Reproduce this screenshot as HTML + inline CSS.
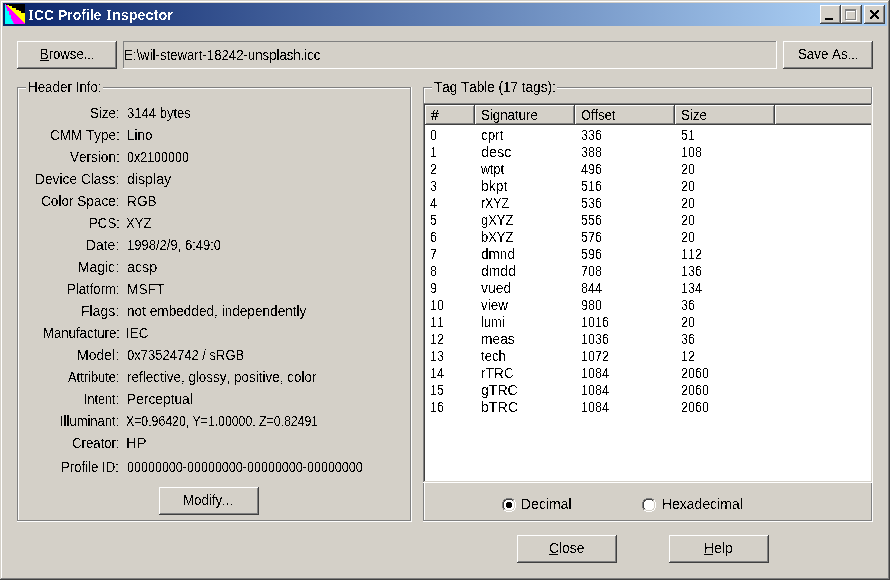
<!DOCTYPE html><html><head><meta charset="utf-8"><title>ICC Profile Inspector</title><style>
html,body{margin:0;padding:0;}
body{width:890px;height:580px;overflow:hidden;background:#d4d0c8;font-family:"Liberation Sans",sans-serif;font-size:14px;color:#000;position:relative;font-kerning:none;}
.a{position:absolute;}
#txt{position:absolute;left:0;top:0;width:890px;height:580px;filter:url(#th);}
#ttl{position:absolute;left:0;top:0;width:200px;height:30px;filter:url(#th2);}
.t{position:absolute;white-space:nowrap;line-height:16px;height:16px;transform-origin:0 0;}
.b{font-weight:bold;color:#fff;}
.sf{font-family:"Liberation Serif",serif;}
.ul{position:absolute;height:1px;background:#000;}
.btn{position:absolute;background:linear-gradient(#404040,#404040) right 0 top 0/1px 100% no-repeat,linear-gradient(#404040,#404040) left 0 bottom 0/100% 1px no-repeat,linear-gradient(#fff,#fff) left 0 top 0/100% 1px no-repeat,linear-gradient(#fff,#fff) left 0 top 0/1px 100% no-repeat,linear-gradient(#808080,#808080) right 1px top 1px/1px calc(100% - 2px) no-repeat,linear-gradient(#808080,#808080) left 1px bottom 1px/calc(100% - 2px) 1px no-repeat,#d4d0c8;}
.sunk{position:absolute;background:linear-gradient(#fff,#fff) right 0 top 0/1px 100% no-repeat,linear-gradient(#fff,#fff) left 0 bottom 0/100% 1px no-repeat,linear-gradient(#808080,#808080) left 0 top 0/100% 1px no-repeat,linear-gradient(#808080,#808080) left 0 top 0/1px 100% no-repeat,linear-gradient(#d4d0c8,#d4d0c8) right 1px top 1px/1px calc(100% - 2px) no-repeat,linear-gradient(#d4d0c8,#d4d0c8) left 1px bottom 1px/calc(100% - 2px) 1px no-repeat,linear-gradient(#404040,#404040) left 1px top 1px/calc(100% - 2px) 1px no-repeat,linear-gradient(#404040,#404040) left 1px top 1px/1px calc(100% - 2px) no-repeat,#fff;}
.fld{position:absolute;background:linear-gradient(#fff,#fff) right 0 top 0/1px 100% no-repeat,linear-gradient(#fff,#fff) left 0 bottom 0/100% 1px no-repeat,linear-gradient(#808080,#808080) left 0 top 0/100% 1px no-repeat,linear-gradient(#808080,#808080) left 0 top 0/1px 100% no-repeat;}
.grp{position:absolute;background:linear-gradient(#fff,#fff) right 0 top 0/1px 100% no-repeat,linear-gradient(#fff,#fff) left 0 bottom 0/100% 1px no-repeat,linear-gradient(#808080,#808080) left 0 top 0/100% 1px no-repeat,linear-gradient(#808080,#808080) left 0 top 0/1px 100% no-repeat,linear-gradient(#808080,#808080) right 1px top 1px/1px calc(100% - 2px) no-repeat,linear-gradient(#808080,#808080) left 1px bottom 1px/calc(100% - 2px) 1px no-repeat,linear-gradient(#fff,#fff) left 1px top 1px/calc(100% - 2px) 1px no-repeat,linear-gradient(#fff,#fff) left 1px top 1px/1px calc(100% - 2px) no-repeat;}
.frm{position:absolute;background:linear-gradient(#404040,#404040) right 0 top 0/1px 100% no-repeat,linear-gradient(#404040,#404040) left 0 bottom 0/100% 1px no-repeat,linear-gradient(#d4d0c8,#d4d0c8) left 0 top 0/100% 1px no-repeat,linear-gradient(#d4d0c8,#d4d0c8) left 0 top 0/1px 100% no-repeat,linear-gradient(#808080,#808080) right 1px top 1px/1px calc(100% - 2px) no-repeat,linear-gradient(#808080,#808080) left 1px bottom 1px/calc(100% - 2px) 1px no-repeat,linear-gradient(#fff,#fff) left 1px top 1px/calc(100% - 2px) 1px no-repeat,linear-gradient(#fff,#fff) left 1px top 1px/1px calc(100% - 2px) no-repeat;}
.gl{position:absolute;background:#d4d0c8;height:4px;}
</style></head><body>
<svg width="0" height="0" style="position:absolute"><defs><filter id="th" x="0" y="0" width="100%" height="100%" color-interpolation-filters="sRGB"><feComponentTransfer><feFuncA type="discrete" tableValues="0 1"/></feComponentTransfer></filter><filter id="th3" x="0" y="0" width="100%" height="100%" color-interpolation-filters="sRGB"><feComponentTransfer><feFuncA type="discrete" tableValues="0 1 1"/></feComponentTransfer></filter><filter id="th2" x="0" y="0" width="100%" height="100%" color-interpolation-filters="sRGB"><feComponentTransfer><feFuncA type="discrete" tableValues="0 0 0 1 1"/></feComponentTransfer></filter></defs></svg>
<div class="frm" style="left:0;top:0;width:890px;height:580px;"></div>
<div class="a" style="left:3px;top:3px;width:884px;height:23px;background:linear-gradient(to right,#0a246a 0,#a6caf0 815px,#a6caf0 100%);"></div>
<svg class="a" style="left:5px;top:4px" width="20" height="20" viewBox="0 0 20 20" shape-rendering="crispEdges"><rect width="20" height="20" fill="#000"/><path d="M2 1H4V2H2ZM3 2H7V3H3ZM4 3H7V4H4ZM5 4H11V5H5ZM6 5H11V6H6ZM7 6H14V7H7ZM8 7H16V8H8ZM9 8H16V9H9ZM10 9H20V10H10ZM11 10H20V11H11ZM12 11H20V12H12ZM13 12H20V13H13ZM14 13H20V14H14ZM15 14H20V15H15ZM16 15H20V16H16ZM17 16H20V17H17ZM18 17H20V18H18ZM19 18H20V19H19Z" fill="#ff0"/><path d="M0 0H1V1H0ZM1 1H2V2H1ZM1 2H3V3H1ZM1 3H4V4H1ZM2 4H5V5H2ZM2 5H6V6H2ZM2 6H7V7H2ZM4 7H8V8H4ZM4 8H9V9H4ZM4 9H10V10H4ZM4 10H11V11H4ZM6 11H12V12H6ZM6 12H13V13H6ZM6 13H14V14H6ZM6 14H15V15H6ZM7 15H16V16H7ZM7 16H17V17H7ZM8 17H18V18H8ZM8 18H19V19H8ZM9 19H20V20H9Z" fill="#f0f"/><path d="M0 1H1V2H0ZM0 2H1V3H0ZM0 3H1V4H0ZM0 4H2V5H0ZM0 5H2V6H0ZM0 6H2V7H0ZM0 7H4V8H0ZM0 8H4V9H0ZM0 9H4V10H0ZM0 10H4V11H0ZM0 11H6V12H0ZM0 12H6V13H0ZM0 13H6V14H0ZM0 14H6V15H0ZM0 15H7V16H0ZM0 16H7V17H0ZM0 17H8V18H0ZM0 18H8V19H0ZM0 19H9V20H0Z" fill="#0ff"/></svg>
<div class="btn" style="left:820px;top:5px;width:21px;height:19px;"></div>
<div class="btn" style="left:841px;top:5px;width:21px;height:19px;"></div>
<div class="btn" style="left:864px;top:5px;width:21px;height:19px;"></div>
<div class="a" style="left:825px;top:18px;width:8px;height:2px;background:#000"></div>
<div class="a" style="left:846px;top:10px;width:9px;height:8px;border:1px solid #fff;border-top-width:2px;"></div>
<div class="a" style="left:845px;top:9px;width:9px;height:8px;border:1px solid #808080;border-top-width:2px;"></div>
<svg class="a" style="left:870px;top:10px" width="9" height="9" viewBox="0 0 9 9" shape-rendering="crispEdges"><path d="M0 0H2V1H0ZM7 0H9V1H7ZM0 1H3V2H0ZM6 1H9V2H6ZM1 2H4V3H1ZM5 2H8V3H5ZM2 3H7V4H2ZM3 4H6V5H3ZM2 5H7V6H2ZM1 6H4V7H1ZM5 6H8V7H5ZM0 7H3V8H0ZM6 7H9V8H6ZM0 8H2V9H0ZM7 8H9V9H7Z" fill="#000"/></svg>
<div class="btn" style="left:17px;top:41px;width:100px;height:28px;"></div>
<div class="fld" style="left:123px;top:41px;width:654px;height:28px;"></div>
<div class="btn" style="left:783px;top:41px;width:90px;height:28px;"></div>
<div class="grp" style="left:17px;top:87px;width:395px;height:435px;"></div>
<div class="gl" style="left:26px;top:86px;width:77px;"></div>
<div class="btn" style="left:159px;top:487px;width:100px;height:28px;"></div>
<div class="grp" style="left:423px;top:87px;width:450px;height:435px;"></div>
<div class="gl" style="left:432px;top:86px;width:125px;"></div>
<div class="sunk" style="left:423px;top:103px;width:450px;height:380px;"></div>
<div class="a" style="left:425px;top:105px;width:446px;height:20px;overflow:hidden"><div class="btn" style="left:0px;top:0;width:50px;height:20px;"></div><div class="btn" style="left:50px;top:0;width:100px;height:20px;"></div><div class="btn" style="left:150px;top:0;width:100px;height:20px;"></div><div class="btn" style="left:250px;top:0;width:100px;height:20px;"></div><div class="btn" style="left:350px;top:0;width:120px;height:20px;"></div></div>
<svg class="a" style="left:502px;top:498px" width="14" height="14" viewBox="0 0 14 14" shape-rendering="crispEdges"><path d="M4 2H10V3H4ZM3 3H11V4H3ZM3 10H11V11H3ZM4 11H10V12H4ZM2 4H12V5H2ZM2 5H12V6H2ZM2 6H12V7H2ZM2 7H12V8H2ZM2 8H12V9H2ZM2 9H12V10H2Z" fill="#fff"/><path d="M4 0H5V1H4ZM5 0H6V1H5ZM6 0H7V1H6ZM7 0H8V1H7ZM8 0H9V1H8ZM9 0H10V1H9ZM2 1H3V2H2ZM3 1H4V2H3ZM10 1H11V2H10ZM11 1H12V2H11ZM1 2H2V3H1ZM1 3H2V4H1ZM1 10H2V11H1ZM1 11H2V12H1ZM0 4H1V5H0ZM0 5H1V6H0ZM0 6H1V7H0ZM0 7H1V8H0ZM0 8H1V9H0ZM0 9H1V10H0Z" fill="#808080"/><path d="M12 2H13V3H12ZM12 3H13V4H12ZM12 10H13V11H12ZM12 11H13V12H12ZM2 12H3V13H2ZM3 12H4V13H3ZM10 12H11V13H10ZM11 12H12V13H11ZM4 13H5V14H4ZM5 13H6V14H5ZM6 13H7V14H6ZM7 13H8V14H7ZM8 13H9V14H8ZM9 13H10V14H9ZM13 4H14V5H13ZM13 5H14V6H13ZM13 6H14V7H13ZM13 7H14V8H13ZM13 8H14V9H13ZM13 9H14V10H13Z" fill="#fff"/><path d="M4 1H5V2H4ZM5 1H6V2H5ZM6 1H7V2H6ZM7 1H8V2H7ZM8 1H9V2H8ZM9 1H10V2H9ZM2 2H3V3H2ZM3 2H4V3H3ZM10 2H11V3H10ZM2 3H3V4H2ZM2 10H3V11H2ZM1 4H2V5H1ZM1 5H2V6H1ZM1 6H2V7H1ZM1 7H2V8H1ZM1 8H2V9H1ZM1 9H2V10H1Z" fill="#404040"/><path d="M11 2H12V3H11ZM11 3H12V4H11ZM11 10H12V11H11ZM2 11H3V12H2ZM3 11H4V12H3ZM10 11H11V12H10ZM11 11H12V12H11ZM4 12H5V13H4ZM5 12H6V13H5ZM6 12H7V13H6ZM7 12H8V13H7ZM8 12H9V13H8ZM9 12H10V13H9ZM12 4H13V5H12ZM12 5H13V6H12ZM12 6H13V7H12ZM12 7H13V8H12ZM12 8H13V9H12ZM12 9H13V10H12Z" fill="#d4d0c8"/><path d="M5 4H9V5H5ZM4 5H10V6H4ZM4 6H10V7H4ZM4 7H10V8H4ZM4 8H10V9H4ZM5 9H9V10H5Z" fill="#000"/></svg>
<svg class="a" style="left:642px;top:498px" width="14" height="14" viewBox="0 0 14 14" shape-rendering="crispEdges"><path d="M4 2H10V3H4ZM3 3H11V4H3ZM3 10H11V11H3ZM4 11H10V12H4ZM2 4H12V5H2ZM2 5H12V6H2ZM2 6H12V7H2ZM2 7H12V8H2ZM2 8H12V9H2ZM2 9H12V10H2Z" fill="#fff"/><path d="M4 0H5V1H4ZM5 0H6V1H5ZM6 0H7V1H6ZM7 0H8V1H7ZM8 0H9V1H8ZM9 0H10V1H9ZM2 1H3V2H2ZM3 1H4V2H3ZM10 1H11V2H10ZM11 1H12V2H11ZM1 2H2V3H1ZM1 3H2V4H1ZM1 10H2V11H1ZM1 11H2V12H1ZM0 4H1V5H0ZM0 5H1V6H0ZM0 6H1V7H0ZM0 7H1V8H0ZM0 8H1V9H0ZM0 9H1V10H0Z" fill="#808080"/><path d="M12 2H13V3H12ZM12 3H13V4H12ZM12 10H13V11H12ZM12 11H13V12H12ZM2 12H3V13H2ZM3 12H4V13H3ZM10 12H11V13H10ZM11 12H12V13H11ZM4 13H5V14H4ZM5 13H6V14H5ZM6 13H7V14H6ZM7 13H8V14H7ZM8 13H9V14H8ZM9 13H10V14H9ZM13 4H14V5H13ZM13 5H14V6H13ZM13 6H14V7H13ZM13 7H14V8H13ZM13 8H14V9H13ZM13 9H14V10H13Z" fill="#fff"/><path d="M4 1H5V2H4ZM5 1H6V2H5ZM6 1H7V2H6ZM7 1H8V2H7ZM8 1H9V2H8ZM9 1H10V2H9ZM2 2H3V3H2ZM3 2H4V3H3ZM10 2H11V3H10ZM2 3H3V4H2ZM2 10H3V11H2ZM1 4H2V5H1ZM1 5H2V6H1ZM1 6H2V7H1ZM1 7H2V8H1ZM1 8H2V9H1ZM1 9H2V10H1Z" fill="#404040"/><path d="M11 2H12V3H11ZM11 3H12V4H11ZM11 10H12V11H11ZM2 11H3V12H2ZM3 11H4V12H3ZM10 11H11V12H10ZM11 11H12V12H11ZM4 12H5V13H4ZM5 12H6V13H5ZM6 12H7V13H6ZM7 12H8V13H7ZM8 12H9V13H8ZM9 12H10V13H9ZM12 4H13V5H12ZM12 5H13V6H12ZM12 6H13V7H12ZM12 7H13V8H12ZM12 8H13V9H12ZM12 9H13V10H12Z" fill="#d4d0c8"/></svg>
<div class="btn" style="left:517px;top:535px;width:100px;height:28px;"></div>
<div class="btn" style="left:669px;top:535px;width:100px;height:28px;"></div>
<div id="ttl"><div class="t b" style="left:29.07px;top:7px;transform:scaleX(0.9918)">I</div>
<div class="t b" style="left:34.43px;top:7px;transform:scaleX(0.9915)">CC</div>
<div class="t b" style="left:58.17px;top:7px;transform:scaleX(0.9941)">Profile</div>
<div class="t b" style="left:107.07px;top:7px;transform:scaleX(0.9918)">I</div>
<div class="t b" style="left:112.05px;top:7px;transform:scaleX(1.0278)">nspector</div>
<div class="a" style="left:29px;top:10px;width:4px;height:1px;background:#fff"></div>
<div class="a" style="left:29px;top:19px;width:4px;height:1px;background:#fff"></div>
<div class="a" style="left:107px;top:10px;width:4px;height:1px;background:#fff"></div>
<div class="a" style="left:107px;top:19px;width:4px;height:1px;background:#fff"></div></div>
<div class="a" style="left:425px;top:105px;width:50px;height:20px;filter:url(#th3)"><div class="a" style="left:-425px;top:-105px"><div class="t" style="left:430.84px;top:107px;transform:scaleX(0.9927)">#</div></div></div>
<div id="txt"><div class="t" style="left:39.73px;top:46px;transform:scaleX(0.9352)">Browse...</div>
<div class="ul" style="left:40px;top:60px;width:9px"></div>
<div class="t" style="left:123.72px;top:47px;transform:scaleX(0.9420)">E:\wil-stewart-18242-unsplash.icc</div>
<div class="t" style="left:797.70px;top:46px;transform:scaleX(0.9500)">Save As...</div>
<div class="t" style="left:27.90px;top:79px;transform:scaleX(0.9568)">Header Info:</div>
<div class="t" style="left:89.95px;top:105px;transform:scaleX(0.9466)">Size:</div>
<div class="t" style="left:49.71px;top:127px;transform:scaleX(0.9638)">CMM Type:</div>
<div class="t" style="left:69.74px;top:149px;transform:scaleX(0.9676)">Version:</div>
<div class="t" style="left:35.37px;top:171px;transform:scaleX(0.9825)">Device Class:</div>
<div class="t" style="left:40.81px;top:193px;transform:scaleX(0.9716)">Color Space:</div>
<div class="t" style="left:88.51px;top:215px;transform:scaleX(0.9455)">PCS:</div>
<div class="t" style="left:86.36px;top:237px;transform:scaleX(0.9892)">Date:</div>
<div class="t" style="left:78.46px;top:259px;transform:scaleX(0.9947)">Magic:</div>
<div class="t" style="left:66.72px;top:281px;transform:scaleX(0.9405)">Platform:</div>
<div class="t" style="left:81.35px;top:303px;transform:scaleX(1.0001)">Flags:</div>
<div class="t" style="left:42.52px;top:325px;transform:scaleX(0.9409)">Manufacture:</div>
<div class="t" style="left:77.45px;top:347px;transform:scaleX(1.0002)">Model:</div>
<div class="t" style="left:67.77px;top:369px;transform:scaleX(0.9210)">Attribute:</div>
<div class="t" style="left:84.34px;top:391px;transform:scaleX(0.8997)">Intent:</div>
<div class="t" style="left:60.10px;top:413px;transform:scaleX(0.9292)">Illuminant:</div>
<div class="t" style="left:71.83px;top:435px;transform:scaleX(0.9407)">Creator:</div>
<div class="t" style="left:61.42px;top:459px;transform:scaleX(0.9435)">Profile ID:</div>
<div class="t" style="left:127.00px;top:105px;transform:scaleX(0.9324)">3144 bytes</div>
<div class="t" style="left:126.60px;top:127px;transform:scaleX(0.9583)">Lino</div>
<div class="t" style="left:127.01px;top:149px;transform:scaleX(0.8930)">0x2100000</div>
<div class="t" style="left:126.90px;top:171px;transform:scaleX(1.0125)">display</div>
<div class="t" style="left:126.57px;top:193px;transform:scaleX(0.9806)">RGB</div>
<div class="t" style="left:126.41px;top:215px;transform:scaleX(0.9329)">XYZ</div>
<div class="t" style="left:126.71px;top:237px;transform:scaleX(0.9299)">1998/2/9, 6:49:0</div>
<div class="t" style="left:126.89px;top:259px;transform:scaleX(1.0180)">acsp</div>
<div class="t" style="left:126.57px;top:281px;transform:scaleX(0.9827)">MSFT</div>
<div class="t" style="left:126.60px;top:303px;transform:scaleX(0.9726)">not embedded, independently</div>
<div class="t" style="left:126.46px;top:325px;transform:scaleX(0.9576)">IEC</div>
<div class="t" style="left:126.99px;top:347px;transform:scaleX(0.9295)">0x73524742 / sRGB</div>
<div class="t" style="left:126.71px;top:369px;transform:scaleX(0.9622)">reflective, glossy, positive, color</div>
<div class="t" style="left:126.57px;top:391px;transform:scaleX(0.9823)">Perceptual</div>
<div class="t" style="left:126.42px;top:413px;transform:scaleX(0.8765)">X=0.96420, Y=1.00000, Z=0.82491</div>
<div class="t" style="left:126.39px;top:435px;transform:scaleX(1.0534)">HP</div>
<div class="t" style="left:127.21px;top:459px;transform:scaleX(0.8960)">00000000-00000000-00000000-00000000</div>
<div class="t" style="left:183.31px;top:492px;transform:scaleX(0.9470)">Modify...</div>
<div class="t" style="left:434.00px;top:79px;transform:scaleX(0.9649)">Tag Table (17 tags):</div>
<div class="t" style="left:480.90px;top:107px;transform:scaleX(0.9476)">Signature</div>
<div class="t" style="left:580.89px;top:107px;transform:scaleX(0.9213)">Offset</div>
<div class="t" style="left:681.00px;top:107px;transform:scaleX(0.9470)">Size</div>
<div class="t" style="left:429.70px;top:127px;transform:scaleX(0.8990)">0</div>
<div class="t" style="left:580.70px;top:127px;transform:scaleX(0.8990)">336</div>
<div class="t" style="left:680.70px;top:127px;transform:scaleX(0.8990)">51</div>
<div class="t" style="left:481.23px;top:127px;transform:scaleX(0.9540)">cprt</div>
<div class="t" style="left:429.70px;top:144px;transform:scaleX(0.8990)">1</div>
<div class="t" style="left:580.70px;top:144px;transform:scaleX(0.8990)">388</div>
<div class="t" style="left:680.70px;top:144px;transform:scaleX(0.8990)">108</div>
<div class="t" style="left:481.19px;top:144px;transform:scaleX(1.0309)">desc</div>
<div class="t" style="left:429.70px;top:161px;transform:scaleX(0.8990)">2</div>
<div class="t" style="left:580.70px;top:161px;transform:scaleX(0.8990)">496</div>
<div class="t" style="left:680.70px;top:161px;transform:scaleX(0.8990)">20</div>
<div class="t" style="left:481.12px;top:161px;transform:scaleX(0.8908)">wtpt</div>
<div class="t" style="left:429.70px;top:178px;transform:scaleX(0.8990)">3</div>
<div class="t" style="left:580.70px;top:178px;transform:scaleX(0.8990)">516</div>
<div class="t" style="left:680.70px;top:178px;transform:scaleX(0.8990)">20</div>
<div class="t" style="left:481.10px;top:178px;transform:scaleX(0.9938)">bkpt</div>
<div class="t" style="left:429.70px;top:195px;transform:scaleX(0.8990)">4</div>
<div class="t" style="left:580.70px;top:195px;transform:scaleX(0.8990)">536</div>
<div class="t" style="left:680.70px;top:195px;transform:scaleX(0.8990)">20</div>
<div class="t" style="left:481.18px;top:195px;transform:scaleX(0.8813)">rXYZ</div>
<div class="t" style="left:429.70px;top:212px;transform:scaleX(0.8990)">5</div>
<div class="t" style="left:580.70px;top:212px;transform:scaleX(0.8990)">556</div>
<div class="t" style="left:680.70px;top:212px;transform:scaleX(0.8990)">20</div>
<div class="t" style="left:481.26px;top:212px;transform:scaleX(0.9238)">gXYZ</div>
<div class="t" style="left:429.70px;top:229px;transform:scaleX(0.8990)">6</div>
<div class="t" style="left:580.70px;top:229px;transform:scaleX(0.8990)">576</div>
<div class="t" style="left:680.70px;top:229px;transform:scaleX(0.8990)">20</div>
<div class="t" style="left:481.16px;top:229px;transform:scaleX(0.9265)">bXYZ</div>
<div class="t" style="left:429.70px;top:246px;transform:scaleX(0.8990)">7</div>
<div class="t" style="left:580.70px;top:246px;transform:scaleX(0.8990)">596</div>
<div class="t" style="left:680.70px;top:246px;transform:scaleX(0.8990)">112</div>
<div class="t" style="left:481.23px;top:246px;transform:scaleX(0.9693)">dmnd</div>
<div class="t" style="left:429.70px;top:263px;transform:scaleX(0.8990)">8</div>
<div class="t" style="left:580.70px;top:263px;transform:scaleX(0.8990)">708</div>
<div class="t" style="left:680.70px;top:263px;transform:scaleX(0.8990)">136</div>
<div class="t" style="left:481.21px;top:263px;transform:scaleX(0.9961)">dmdd</div>
<div class="t" style="left:429.70px;top:280px;transform:scaleX(0.8990)">9</div>
<div class="t" style="left:580.70px;top:280px;transform:scaleX(0.8990)">844</div>
<div class="t" style="left:680.70px;top:280px;transform:scaleX(0.8990)">134</div>
<div class="t" style="left:481.05px;top:280px;transform:scaleX(0.9997)">vued</div>
<div class="t" style="left:429.70px;top:297px;transform:scaleX(0.8990)">10</div>
<div class="t" style="left:580.70px;top:297px;transform:scaleX(0.8990)">980</div>
<div class="t" style="left:680.70px;top:297px;transform:scaleX(0.8990)">36</div>
<div class="t" style="left:481.05px;top:297px;transform:scaleX(0.9574)">view</div>
<div class="t" style="left:429.70px;top:314px;transform:scaleX(0.8990)">11</div>
<div class="t" style="left:580.70px;top:314px;transform:scaleX(0.8990)">1016</div>
<div class="t" style="left:680.70px;top:314px;transform:scaleX(0.8990)">20</div>
<div class="t" style="left:481.13px;top:314px;transform:scaleX(0.9209)">lumi</div>
<div class="t" style="left:429.70px;top:331px;transform:scaleX(0.8990)">12</div>
<div class="t" style="left:580.70px;top:331px;transform:scaleX(0.8990)">1036</div>
<div class="t" style="left:680.70px;top:331px;transform:scaleX(0.8990)">36</div>
<div class="t" style="left:481.08px;top:331px;transform:scaleX(0.9848)">meas</div>
<div class="t" style="left:429.70px;top:348px;transform:scaleX(0.8990)">13</div>
<div class="t" style="left:580.70px;top:348px;transform:scaleX(0.8990)">1072</div>
<div class="t" style="left:680.70px;top:348px;transform:scaleX(0.8990)">12</div>
<div class="t" style="left:481.30px;top:348px;transform:scaleX(0.9431)">tech</div>
<div class="t" style="left:429.70px;top:365px;transform:scaleX(0.8990)">14</div>
<div class="t" style="left:580.70px;top:365px;transform:scaleX(0.8990)">1084</div>
<div class="t" style="left:680.70px;top:365px;transform:scaleX(0.8990)">2060</div>
<div class="t" style="left:481.09px;top:365px;transform:scaleX(0.9759)">rTRC</div>
<div class="t" style="left:429.70px;top:382px;transform:scaleX(0.8990)">15</div>
<div class="t" style="left:580.70px;top:382px;transform:scaleX(0.8990)">1084</div>
<div class="t" style="left:680.70px;top:382px;transform:scaleX(0.8990)">2060</div>
<div class="t" style="left:481.21px;top:382px;transform:scaleX(1.0046)">gTRC</div>
<div class="t" style="left:429.70px;top:399px;transform:scaleX(0.8990)">16</div>
<div class="t" style="left:580.70px;top:399px;transform:scaleX(0.8990)">1084</div>
<div class="t" style="left:680.70px;top:399px;transform:scaleX(0.8990)">2060</div>
<div class="t" style="left:481.09px;top:399px;transform:scaleX(1.0079)">bTRC</div>
<div class="t" style="left:521.35px;top:496px;transform:scaleX(1.0004)">Decimal</div>
<div class="t" style="left:661.75px;top:496px;transform:scaleX(0.9982)">Hexadecimal</div>
<div class="t" style="left:548.80px;top:540px;transform:scaleX(0.9867)">Close</div>
<div class="ul" style="left:549px;top:554px;width:9px"></div>
<div class="t" style="left:703.75px;top:540px;transform:scaleX(1.0053)">Help</div>
<div class="ul" style="left:704px;top:554px;width:9px"></div></div>
</body></html>
